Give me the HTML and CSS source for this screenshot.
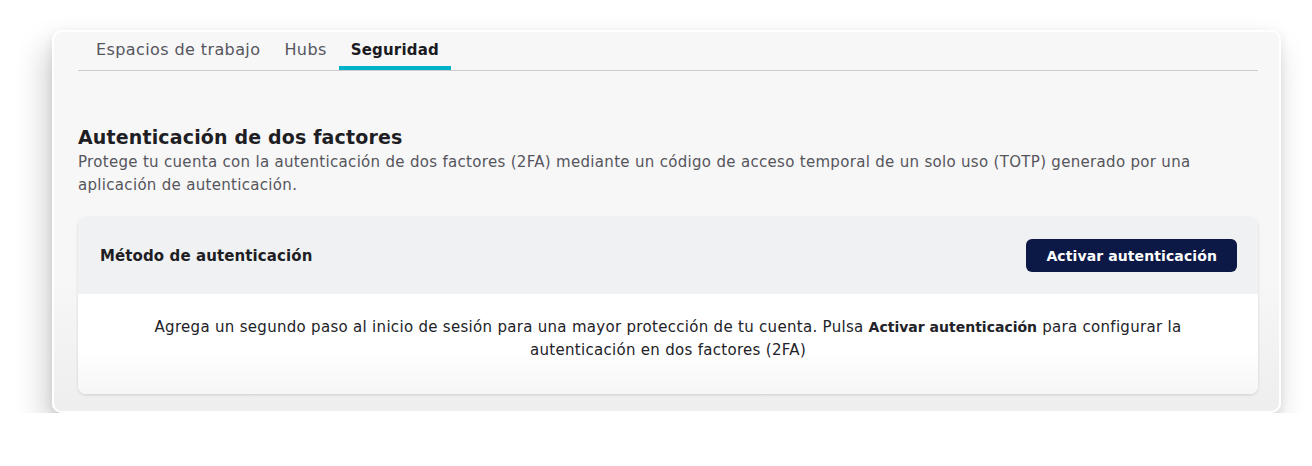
FILE: index.html
```html
<!DOCTYPE html>
<html lang="es">
<head>
<meta charset="utf-8">
<title>Seguridad</title>
<link rel="stylesheet" href="styles.css">
</head>
<body>
<div class="window">
  <nav class="tabs">
    <a class="tab">Espacios de trabajo</a>
    <a class="tab">Hubs</a>
    <a class="tab active">Seguridad</a>
  </nav>
  <section class="section">
    <h1 class="title">Autenticación de dos factores</h1>
    <p class="desc">Protege tu cuenta con la autenticación de dos factores (2FA) mediante un código de acceso temporal de un solo uso (TOTP) generado por una aplicación de autenticación.</p>
    <div class="card">
      <div class="card-head">
        <h2 class="card-title">Método de autenticación</h2>
        <button class="btn">Activar autenticación</button>
      </div>
      <div class="card-body">
        <p class="body-text">Agrega un segundo paso al inicio de sesión para una mayor protección de tu cuenta. Pulsa <b>Activar autenticación</b> para configurar la autenticación en dos factores (2FA)</p>
      </div>
    </div>
  </section>
</div>
</body>
</html>
```
FILE: styles.css
```css
html, body {
  margin: 0;
  padding: 0;
  background: #ffffff;
}
body {
  font-family: "DejaVu Sans", "Liberation Sans", sans-serif;
  color: #1e1e24;
}
.window {
  box-sizing: border-box;
  margin: 30px 0 0 52px;
  width: 1229px;
  height: 383px;
  border: 2px solid #ffffff;
  border-radius: 10px;
  background: linear-gradient(#f7f7f7 65%, #eeeeee);
  box-shadow: -6px 16px 32px rgba(0, 0, 0, 0.2), 0 3px 10px rgba(0, 0, 0, 0.08);
  padding: 0 21px 0 24px;
}
.tabs {
  display: flex;
  height: 38px;
  border-bottom: 1px solid #cbcbd1;
  padding-left: 6px;
}
.tab {
  display: flex;
  align-items: center;
  padding: 0 12px;
  font-size: 16px;
  letter-spacing: 0.4px;
  color: #55555d;
  box-sizing: border-box;
  height: 38px;
  padding-top: 1px;
  border-bottom: 4px solid transparent;
}
.tab.active {
  font-size: 15px;
  letter-spacing: 0.2px;
  font-weight: 600;
  color: #1b1b1f;
  border-bottom-color: #00b3c8;
}
.section {
  padding-top: 52px;
}
.title {
  margin: 0;
  font-size: 19px;
  letter-spacing: 0.15px;
  line-height: 28px;
  font-weight: 600;
  color: #1e1e24;
}
.desc {
  margin: 0;
  font-size: 15px;
  letter-spacing: 0.31px;
  line-height: 23px;
  color: #55555c;
}
.card {
  margin-top: 20px;
  border-radius: 8px;
  overflow: hidden;
  background: #ffffff;
  box-shadow: 0 1px 3px rgba(0, 0, 0, 0.14);
}
.card-head {
  display: flex;
  align-items: center;
  justify-content: space-between;
  height: 77px;
  padding: 0 21px 0 22px;
  background: #f0f1f3;
}
.card-title {
  margin: 0;
  font-size: 15px;
  letter-spacing: 0.1px;
  font-weight: 600;
  color: #1e1e24;
}
.btn {
  height: 33px;
  padding: 0 20px;
  border: 0;
  border-radius: 6px;
  background: #0c1846;
  color: #ffffff;
  font-family: inherit;
  font-size: 14px;
  letter-spacing: 0.1px;
  font-weight: 600;
}
.card-body {
  height: 100px;
  box-sizing: border-box;
  padding: 22px 60px 0;
  background: linear-gradient(#ffffff 55%, #f6f6f6);
}
.body-text {
  margin: 0;
  text-align: center;
  font-size: 15px;
  letter-spacing: 0.3px;
  line-height: 23px;
  color: #222228;
}
.body-text b {
  font-size: 14px;
  letter-spacing: 0;
  font-weight: 600;
}
```
